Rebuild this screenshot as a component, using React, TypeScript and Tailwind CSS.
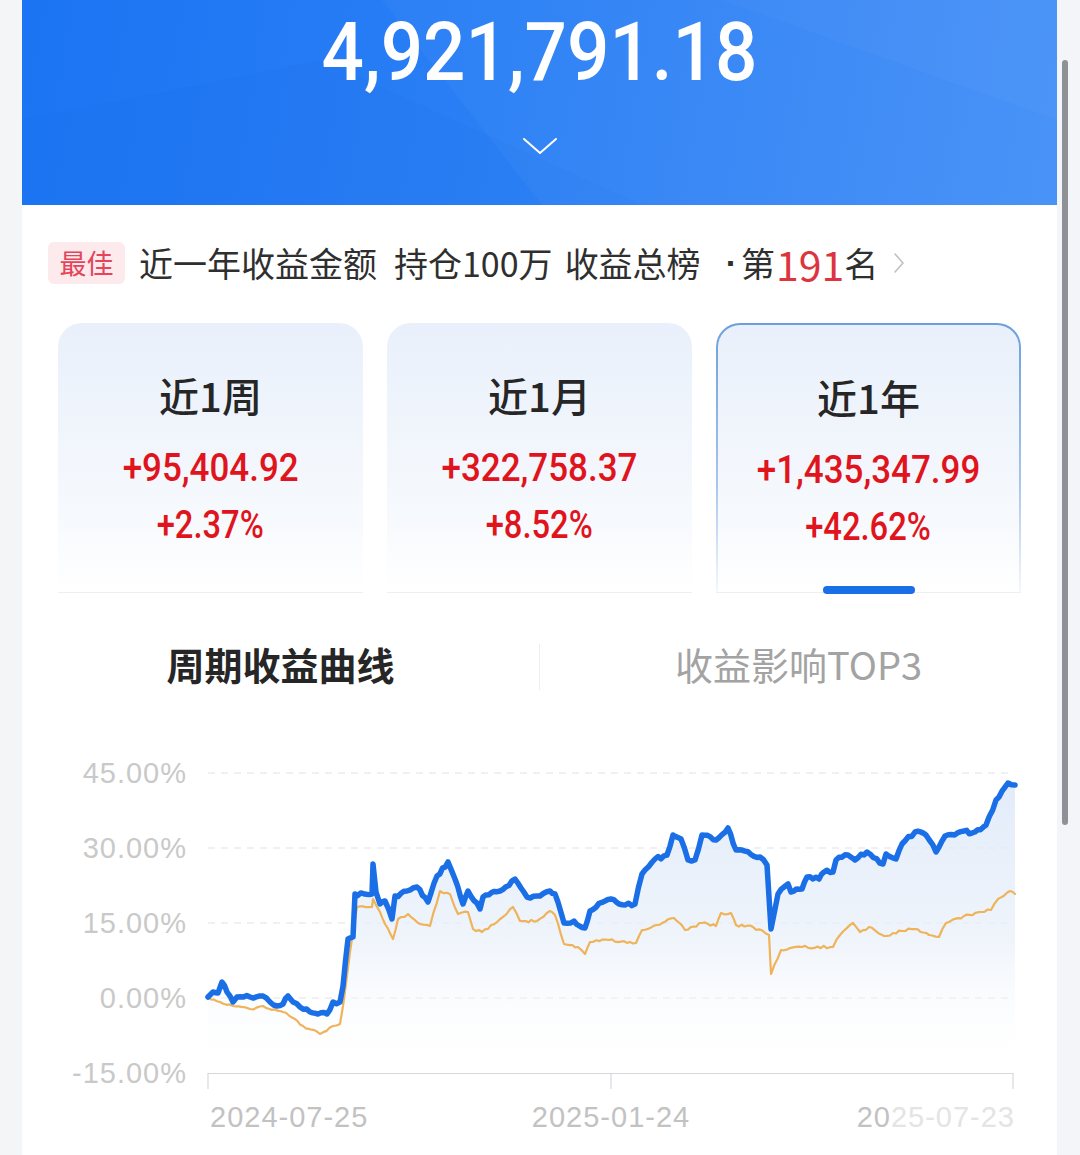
import React from "react";

type P = [number, number];

const BLUE: P[] = [[208,998],[213,993],[218,994],[222,983],[227,993],[233,1003],[237,998],[250,998],[263,997],[270,1003],[277,1007],[283,1005],[288,997],[293,1003],[300,1008],[310,1013],[318,1015],[327,1015],[333,1003],[340,1003],[343,987],[348,940],[353,938],[355,895],[372,895],[373,865],[376,893],[380,905],[385,902],[392,920],[395,897],[407,892],[417,888],[428,903],[437,877],[448,863],[455,880],[463,905],[468,892],[480,910],[483,898],[500,892],[515,880],[527,898],[540,897],[550,892],[555,895],[564,924],[574,922],[585,929],[590,912],[605,902],[611,900],[619,905],[635,905],[642,875],[655,860],[667,856],[673,836],[681,840],[688,861],[695,861],[702,836],[716,841],[728,829],[736,851],[760,858],[767,866],[771,930],[778,895],[788,885],[791,893],[802,890],[807,878],[819,880],[824,873],[833,873],[836,861],[848,856],[855,861],[867,853],[883,865],[886,855],[896,860],[902,845],[915,833],[926,836],[936,853],[945,837],[964,832],[972,834],[986,826],[996,801],[1008,784],[1015,786]];

const ORANGE: P[] = [[208,998],[220,1003],[233,1007],[250,1010],[263,1007],[283,1013],[303,1027],[320,1035],[333,1027],[340,1025],[343,1007],[350,953],[357,908],[372,908],[373,900],[380,913],[385,925],[393,940],[398,920],[408,915],[420,925],[430,927],[440,892],[450,895],[458,915],[468,913],[473,930],[482,933],[497,923],[513,908],[520,922],[537,922],[550,912],[555,916],[564,945],[578,948],[585,955],[590,943],[609,941],[636,944],[642,931],[657,926],[674,919],[685,931],[702,924],[716,927],[721,914],[731,914],[736,926],[753,928],[769,936],[771,975],[781,951],[802,948],[833,948],[840,936],[853,924],[860,933],[869,928],[884,937],[902,932],[915,930],[929,936],[939,938],[946,924],[964,917],[981,913],[991,911],[998,900],[1010,892],[1015,895]];

function build(pts: P[], step: number, amp: number, seed: number): P[] {
  let s = seed;
  const rnd = () => {
    s = (s * 9301 + 49297) % 233280;
    return s / 233280;
  };
  const out: P[] = [];
  for (let i = 0; i < pts.length - 1; i++) {
    const [x0, y0] = pts[i];
    const [x1, y1] = pts[i + 1];
    const n = Math.max(1, Math.round((x1 - x0) / step));
    for (let k = 0; k < n; k++) {
      const t = k / n;
      let y = y0 + (y1 - y0) * t;
      if (k > 0) y += (rnd() - 0.5) * 2 * amp;
      out.push([x0 + (x1 - x0) * t, y]);
    }
  }
  out.push(pts[pts.length - 1]);
  return out;
}

const toPath = (pts: P[]) =>
  pts.map((p, i) => `${i === 0 ? "M" : "L"}${p[0].toFixed(1)} ${p[1].toFixed(1)}`).join(" ");

const blueLine = build(BLUE, 3, 1.8, 7);
const orangeLine = build(ORANGE, 3, 1.3, 19);
const bluePath = toPath(blueLine);
const orangePath = toPath(orangeLine);
const areaPath = `${bluePath} L1015 1074 L208 1074 Z`;

const CJK = "font-['Noto_Sans_CJK_SC','Noto_Sans',sans-serif]";
const NUM = "font-['Roboto','Noto_Sans',sans-serif]";

function Chart() {
  const labelFont = "'Liberation Sans', Arial, sans-serif";
  const yLabels = [
    { t: "45.00%", y: 774 },
    { t: "30.00%", y: 849 },
    { t: "15.00%", y: 924 },
    { t: "0.00%", y: 999 },
    { t: "-15.00%", y: 1074 },
  ];
  return (
    <svg width="1035" height="425" viewBox="22 730 1035 425" className="block">
      <defs>
        <linearGradient id="area" x1="0" y1="780" x2="0" y2="1074" gradientUnits="userSpaceOnUse">
          <stop offset="0" stopColor="#dce8f8" stopOpacity="0.85" />
          <stop offset="0.55" stopColor="#e9f0fa" stopOpacity="0.7" />
          <stop offset="1" stopColor="#ffffff" stopOpacity="0" />
        </linearGradient>
      </defs>
      {yLabels.map((l) => (
        <text
          key={l.t}
          x={187}
          y={l.y + 10}
          textAnchor="end"
          fontFamily={labelFont}
          fontSize={29}
          letterSpacing={1}
          fill="#c9c9c9"
        >
          {l.t}
        </text>
      ))}
      {[774, 849, 924, 999].map((y) => (
        <line key={y} x1={208} x2={1013} y1={y} y2={y} stroke="#dfe2e7" strokeWidth={1.2} strokeDasharray="7 6" />
      ))}
      <path d={areaPath} fill="url(#area)" />
      <line x1={208} x2={1013} y1={1074.5} y2={1074.5} stroke="#d6d8dc" strokeWidth={1.2} />
      {[208, 611, 1013].map((x) => (
        <line key={x} x1={x} x2={x} y1={1074} y2={1090} stroke="#d6d8dc" strokeWidth={1.2} />
      ))}
      <path d={orangePath} fill="none" stroke="#efb35a" strokeWidth={2.2} strokeLinejoin="round" strokeLinecap="round" />
      <path d={bluePath} fill="none" stroke="#1b6fe6" strokeWidth={5.5} strokeLinejoin="round" strokeLinecap="round" />
      <text x={210} y={1128} fontFamily={labelFont} fontSize={29} letterSpacing={1} fill="#c2c2c2">
        2024-07-25
      </text>
      <text x={611} y={1128} textAnchor="middle" fontFamily={labelFont} fontSize={29} letterSpacing={1} fill="#c2c2c2">
        2025-01-24
      </text>
      <text x={1015} y={1128} textAnchor="end" fontFamily={labelFont} fontSize={29} letterSpacing={1} fill="#c2c2c2">
        20<tspan fill="#e4e4e4">25-07-23</tspan>
      </text>
    </svg>
  );
}

type CardProps = { title: string; amount: string; pct: string; active?: boolean };

function PeriodCard({ title, amount, pct, active }: CardProps) {
  const inner = (
    <div
      className={`flex h-full flex-col items-center bg-[linear-gradient(to_bottom,#e9f0fb,#f6f9fd_70%,#ffffff)] ${
        active ? "rounded-t-[22px]" : "rounded-t-[24px]"
      }`}
    >
      <div className={`mt-[48px] h-[48px] text-[40px] leading-[48px] font-medium text-[#262626] ${CJK}`}>{title}</div>
      <div className={`mt-[25px] h-[48px] text-[38px] leading-[48px] font-medium text-[#e0141c] ${NUM} scale-x-[0.92]`}>
        {amount}
      </div>
      <div className={`mt-[9px] h-[48px] text-[38px] leading-[48px] font-medium text-[#e0141c] ${NUM} scale-x-[0.86]`}>
        {pct}
      </div>
    </div>
  );
  return (
    <div className="relative flex flex-1 flex-col">
      {active ? (
        <div className="h-[269px] rounded-t-[24px] bg-[linear-gradient(to_bottom,#6b9fdc,#a9c6ea_60%,rgba(220,230,245,0.3))] px-[2px] pt-[2px]">
          {inner}
        </div>
      ) : (
        <div className="h-[269px]">{inner}</div>
      )}
      <div className="h-px bg-[#eceff3]" />
      {active && (
        <div className="absolute bottom-[-1px] left-1/2 h-[8px] w-[92px] -translate-x-1/2 rounded-[4px] bg-[#1a6ee6]" />
      )}
    </div>
  );
}

export default function App() {
  return (
    <div className="flex h-[1155px] w-[1080px] overflow-hidden bg-[#f4f5f8]">
      <div className="w-[22px] shrink-0 bg-[#f4f5f7]" />
      <div className="flex w-[1035px] shrink-0 flex-col bg-white">
        {/* header */}
        <div className="relative h-[205px] overflow-hidden bg-[linear-gradient(100deg,#1b74f3_0%,#2a7ff5_45%,#4490f7_100%)]">
          <svg className="absolute inset-0" width="1035" height="205" viewBox="0 0 1035 205">
            <polygon points="360,0 1035,0 1035,205 520,205" fill="#ffffff" opacity="0.03" />
            <polygon points="0,120 300,60 620,205 0,205" fill="#0d5fe0" opacity="0.05" />
            <polygon points="700,0 1035,0 1035,120" fill="#ffffff" opacity="0.025" />
          </svg>
          <div className="relative flex flex-col items-center">
            <div className={`pt-[11px] text-[82px] leading-[82px] font-medium text-white ${NUM} scale-x-[0.91]`}>
              4,921,791.18
            </div>
            <svg className="mt-[44px]" width="36" height="18" viewBox="0 0 36 18">
              <polyline points="2,2 18,16 34,2" fill="none" stroke="#ffffff" strokeWidth="2" strokeLinejoin="round" strokeLinecap="round" />
            </svg>
          </div>
        </div>

        {/* ranking row */}
        <div className={`flex h-[116px] items-center pl-[26px] text-[#2f2f2f] ${CJK}`}>
          <div className="flex h-[42px] w-[77px] items-center justify-center rounded-[6px] bg-[#fdeaec] text-[27px] text-[#e4455a]">
            最佳
          </div>
          <div className="ml-[14px] text-[34px] leading-[44px]">近一年收益金额</div>
          <div className="ml-[17px] text-[34px] leading-[44px]">持仓100万</div>
          <div className="ml-[12px] text-[34px] leading-[44px]">收益总榜</div>
          <div className="ml-[25px] font-['Liberation_Sans',Arial,sans-serif] text-[34px] leading-[44px] font-bold">·</div>
          <div className="ml-[4px] text-[34px] leading-[44px]">第</div>
          <div className="ml-[1px] text-[41px] leading-[44px] text-[#dc3540]">191</div>
          <div className="text-[34px] leading-[44px]">名</div>
          <svg className="ml-[15px]" width="12" height="22" viewBox="0 0 12 22">
            <polyline points="2,2 10,11 2,20" fill="none" stroke="#c0c0c0" strokeWidth="1.6" strokeLinejoin="round" strokeLinecap="round" />
          </svg>
        </div>

        {/* cards */}
        <div className="mt-[2px] flex gap-[24px] px-[36px]">
          <PeriodCard title="近1周" amount="+95,404.92" pct="+2.37%" />
          <PeriodCard title="近1月" amount="+322,758.37" pct="+8.52%" />
          <PeriodCard title="近1年" amount="+1,435,347.99" pct="+42.62%" active />
        </div>

        {/* tabs */}
        <div className={`flex h-[136px] items-start pt-[49px] ${CJK}`}>
          <div className="flex flex-1 justify-center text-[38px] leading-[44px] font-bold text-[#262626]">周期收益曲线</div>
          <div className="mt-[2px] h-[46px] w-px bg-[#eeeeee]" />
          <div className="flex flex-1 justify-center text-[38px] leading-[44px] text-[#a3a3a3]">收益影响TOP3</div>
        </div>

        <Chart />
      </div>
      <div className="flex-1 bg-[#f3f5f8] pl-[5px] pt-[60px]">
        <div className="h-[765px] w-[6px] rounded-[3px] bg-[#8e9297]" />
      </div>
    </div>
  );
}
